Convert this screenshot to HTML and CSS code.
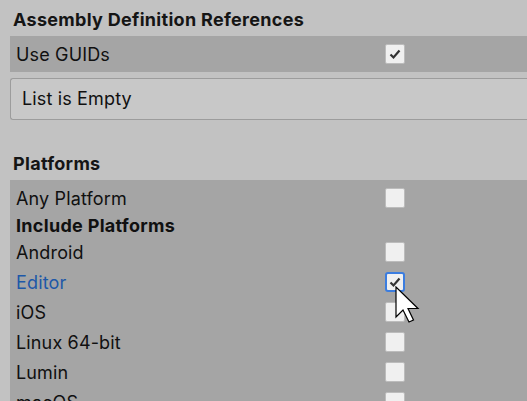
FILE: index.html
```html
<!DOCTYPE html>
<html>
<head>
<meta charset="utf-8">
<link rel="stylesheet" href="styles.css">
</head>
<body>
<div class="panel">
  <div class="title">Assembly Definition References</div>
  <div class="band">
    <div class="row">
      <span class="label">Use GUIDs</span>
      <span class="check on"><svg viewBox="0 0 20 20" width="20" height="20"><path d="M5.5 10.5 L8.5 13.5 L14.5 6.5" fill="none" stroke="#333333" stroke-width="2.2"/></svg></span>
    </div>
  </div>
  <div class="listbox">List is Empty</div>
  <div class="title second">Platforms</div>
  <div class="band tall">
    <div class="row">
      <span class="label">Any Platform</span>
      <span class="check"></span>
    </div>
    <div class="row sub">
      <span class="label bold">Include Platforms</span>
    </div>
    <div class="row">
      <span class="label">Android</span>
      <span class="check"></span>
    </div>
    <div class="row">
      <span class="label blue">Editor</span>
      <span class="check on focus"><svg viewBox="0 0 20 20" width="20" height="20"><path d="M5.5 10.5 L8.5 13.5 L14.5 6.5" fill="none" stroke="#333333" stroke-width="2.2"/></svg></span>
    </div>
    <div class="row">
      <span class="label">iOS</span>
      <span class="check"></span>
    </div>
    <div class="row">
      <span class="label">Linux 64-bit</span>
      <span class="check"></span>
    </div>
    <div class="row">
      <span class="label">Lumin</span>
      <span class="check"></span>
    </div>
    <div class="row">
      <span class="label">macOS</span>
      <span class="check"></span>
    </div>
  </div>
</div>
<svg class="cursor" width="26" height="38" viewBox="0 0 26 38">
  <path d="M1 1 L1 31 L8 24 L14 36 L18.5 34 L13 22.5 L23 22.5 Z" fill="#ffffff" stroke="#000000" stroke-width="1.2" stroke-linejoin="miter"/>
</svg>
</body>
</html>
```

FILE: styles.css
```css
html, body {
  margin: 0;
  padding: 0;
  overflow: hidden;
}
body {
  background: #c2c2c2;
  width: 527px;
  height: 401px;
  position: relative;
  font-family: Inter, "Noto Sans", sans-serif;
  font-size: 18px;
  letter-spacing: 0.15px;
  color: #101010;
}
.panel {
  width: 580px;
  padding-left: 10px;
}
.title {
  font-weight: 700;
  letter-spacing: 0.3px;
  line-height: 33px;
  padding-top: 3px;
  padding-left: 3px;
  color: #151515;
}
.title.second {
  margin-top: 27px;
  padding-top: 0;
}
.band {
  background: #a5a5a5;
  padding: 3px 0;
}
.band.tall {
  height: 400px;
}
.row {
  display: flex;
  align-items: center;
  height: 30px;
  padding-left: 6px;
}
.row.sub {
  height: 24px;
}
.label {
  flex: 0 0 369px;
}
.label.bold {
  font-weight: 700;
  letter-spacing: 0.3px;
}
.label.blue {
  color: #1d58a8;
}
.check {
  box-sizing: border-box;
  width: 20px;
  height: 20px;
  background: #f0f0f0;
  border: 1px solid #bcbcbc;
  border-radius: 2px;
  display: flex;
  align-items: center;
  justify-content: center;
}
.check svg {
  display: block;
  flex: none;
}
.check.focus {
  border: 2px solid #3b7de0;
  border-radius: 3px;
}
.listbox {
  margin-top: 6px;
  height: 40px;
  line-height: 40px;
  border: 1px solid #9c9c9c;
  border-right: none;
  border-radius: 3px 0 0 3px;
  background: #c8c8c8;
  padding-left: 11px;
}
.cursor {
  position: absolute;
  left: 395px;
  top: 286px;
}
```
